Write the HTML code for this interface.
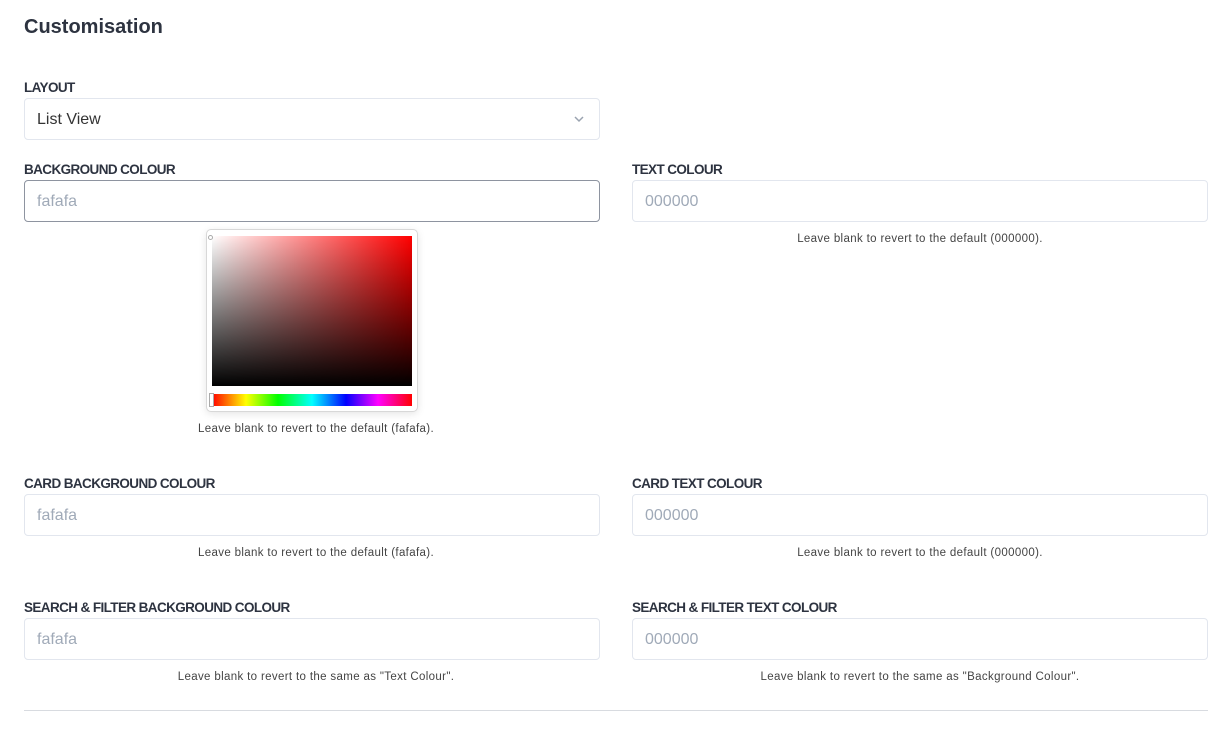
<!DOCTYPE html>
<html><head><style>
body{margin:0;background:#fff;font-family:"Liberation Sans",sans-serif;width:1230px;height:730px;position:relative;overflow:hidden}
.a{position:absolute}
h1{position:absolute;left:24px;top:16px;margin:0;font-size:20px;font-weight:bold;color:#2d3340}
.lbl{position:absolute;font-size:13.5px;font-weight:bold;color:#2d3340;letter-spacing:-0.6px;line-height:16px}
.in{position:absolute;width:574px;height:40px;border:1px solid #e2e6ee;border-radius:4px;box-sizing:content-box;font-size:16px;color:#a0aab8;line-height:42px;text-indent:12px}
.help{position:absolute;width:576px;text-align:center;font-size:11.5px;color:#444;line-height:14px;letter-spacing:0.35px}
</style></head><body>
<h1>Customisation</h1>
<div class="lbl" style="left:24px;top:80px">LAYOUT</div>
<div class="in" style="left:24px;top:98px;color:#333">List View
<svg class="a" style="left:548px;top:15px" width="12" height="10" viewBox="0 0 12 10"><path d="M2 3l4 4 4-4" stroke="#9aa3b0" stroke-width="1.5" fill="none"/></svg></div>

<div class="lbl" style="left:24px;top:162px">BACKGROUND COLOUR</div>
<div class="in" style="left:24px;top:180px;border-color:#8e94a0">fafafa</div>
<div class="lbl" style="left:632px;top:162px">TEXT COLOUR</div>
<div class="in" style="left:632px;top:180px">000000</div>
<div class="help" style="left:632px;top:232px">Leave blank to revert to the default (000000).</div>

<div class="a" style="left:206px;top:229px;width:210px;height:181px;border:1px solid #d8d8d8;border-radius:5px;background:#fff;box-shadow:0 2px 8px rgba(0,0,0,.1)"></div>
<div class="a" style="left:212px;top:236px;width:200px;height:150px;background:linear-gradient(to top,#000,rgba(0,0,0,0)),linear-gradient(to right,#fff,#f00)"></div>
<div class="a" style="left:208px;top:235px;width:3px;height:3px;border:1px solid #aaa;border-radius:50%"></div>
<div class="a" style="left:212px;top:394px;width:200px;height:12px;background:linear-gradient(to right,#f00,#ff0 17%,#0f0 33%,#0ff 50%,#00f 67%,#f0f 83%,#f00)"></div>
<div class="a" style="left:209px;top:393px;width:3px;height:12px;background:#fff;border:1px solid #aaa"></div>
<div class="help" style="left:28px;top:422px">Leave blank to revert to the default (fafafa).</div>

<div class="lbl" style="left:24px;top:476px">CARD BACKGROUND COLOUR</div>
<div class="in" style="left:24px;top:494px">fafafa</div>
<div class="help" style="left:28px;top:546px">Leave blank to revert to the default (fafafa).</div>
<div class="lbl" style="left:632px;top:476px">CARD TEXT COLOUR</div>
<div class="in" style="left:632px;top:494px">000000</div>
<div class="help" style="left:632px;top:546px">Leave blank to revert to the default (000000).</div>

<div class="lbl" style="left:24px;top:600px">SEARCH &amp; FILTER BACKGROUND COLOUR</div>
<div class="in" style="left:24px;top:618px">fafafa</div>
<div class="help" style="left:28px;top:670px">Leave blank to revert to the same as "Text Colour".</div>
<div class="lbl" style="left:632px;top:600px">SEARCH &amp; FILTER TEXT COLOUR</div>
<div class="in" style="left:632px;top:618px">000000</div>
<div class="help" style="left:632px;top:670px">Leave blank to revert to the same as "Background Colour".</div>

<div class="a" style="left:24px;top:710px;width:1184px;height:1px;background:#d8dbe0"></div>
</body></html>
